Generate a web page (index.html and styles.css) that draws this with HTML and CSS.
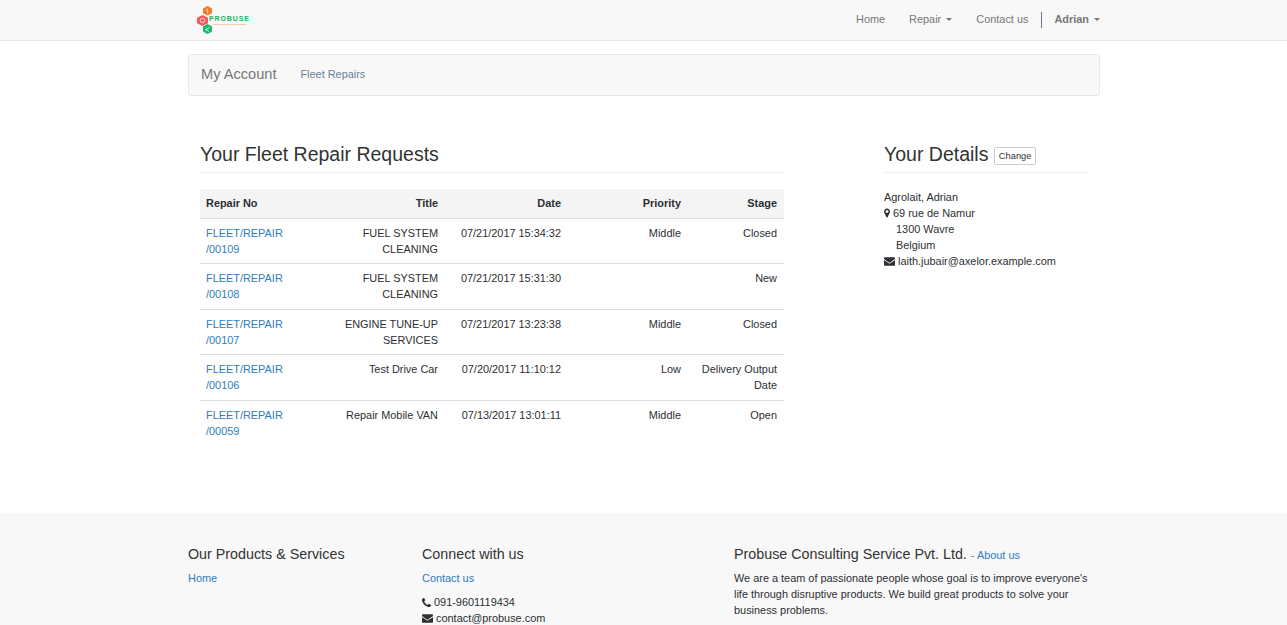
FILE: index.html
```html
<!DOCTYPE html>
<html lang="en">
<head>
<meta charset="utf-8">
<title>Fleet Repairs</title>
<link rel="stylesheet" href="styles.css">
</head>
<body>
<svg class="defs" width="0" height="0" aria-hidden="true">
  <symbol id="i-marker" viewBox="384 128 1024 1536"><path d="M1152 640q0-106-75-181t-181-75-181 75-75 181 75 181 181 75 181-75 75-181zm256 0q0 109-33 179l-364 774q-16 33-47.5 52t-67.5 19-67.5-19-46.5-52l-365-774q-33-70-33-179 0-212 150-362t362-150 362 150 150 362z"/></symbol>
  <symbol id="i-env" viewBox="0 256 1792 1408"><path d="M1792 710v794q0 66-47 113t-113 47h-1472q-66 0-113-47t-47-113v-794q44 49 101 87 362 246 497 345 57 42 92.5 65.5t94.5 48 110 24.5h2q51 0 110-24.5t94.5-48 92.5-65.5q170-123 498-345 57-39 100-87zm0-294q0 79-49 151t-122 123q-376 261-468 325-10 7-42.5 30.5t-54 38-52 32.5-57.5 27-50 9h-2q-23 0-50-9t-57.5-27-52-32.5-54-38-42.5-30.5q-91-64-262-182.5t-205-142.5q-62-42-117-115.5t-55-136.5q0-78 41.5-130t118.5-52h1472q65 0 112.5 47t47.5 113z"/></symbol>
  <symbol id="i-phone" viewBox="192 128 1408 1408"><path d="M1600 1240q0 27-10 70.5t-21 68.5q-21 50-122 106-94 51-186 51-27 0-53-3.5t-57.5-12.5-47-14.5-55.5-20.5-49-18q-98-35-175-83-127-79-264-216t-216-264q-48-77-83-175-3-9-18-49t-20.5-55.5-14.5-47-12.5-57.5-3.5-53q0-92 51-186 56-101 106-122 25-11 68.5-21t70.5-10q14 0 21 3 18 6 53 76 11 19 30 54t35 63.5 31 53.5q3 4 17.5 25t21.5 35.5 7 28.5q0 20-28.5 50t-62 55-62 53-28.5 46q0 9 5 22.5t8.5 20.5 14 24 11.5 19q76 137 174 235t235 174q2 1 19 11.5t24 14 20.5 8.5 22.5 5q18 0 46-28.5t53-62 55-62 50-28.5q14 0 28.5 7t35.5 21.5 25 17.5q25 15 53.5 31t63.5 35 54 30q70 35 76 53 3 7 3 21z"/></symbol>
</svg>

<header class="navbar">
  <div class="wrap navbar-inner">
    <a class="logo" href="#">
      <svg class="logo-mark" width="18" height="28" viewBox="0 0 18 28" aria-hidden="true">
        <polygon points="10.5,0 15,2.4 15,7.2 10.5,9.6 6,7.2 6,2.4" fill="#f47b2a"/>
        <polygon points="5.5,9 11,11.8 11,17.2 5.5,20 0,17.2 0,11.8" fill="#ef5a5c"/>
        <polygon points="10.5,18 15,20.6 15,25.4 10.5,28 6,25.4 6,20.6" fill="#17b868"/>
        <circle cx="5.5" cy="14.5" r="2.2" fill="none" stroke="#fcdcdc" stroke-width="1"/>
        <path d="M8.5 23.5l4-2M8.5 23.5l3.5 2" stroke="#d5f5e4" stroke-width="1"/>
        <path d="M10.5 2.5v5M9 4l2.5 1" stroke="#fbc8a3" stroke-width="1" fill="none"/>
      </svg>
      <span class="logo-text">
        <span class="logo-name">PROBUSE</span>
        <span class="logo-tag">PROFESSIONAL BUILDERS</span>
      </span>
    </a>
    <nav class="nav">
      <a href="#">Home</a>
      <a href="#">Repair <i class="caret"></i></a>
      <a href="#">Contact us</a>
      <span class="nav-divider"></span>
      <a class="nav-user" href="#">Adrian <i class="caret"></i></a>
    </nav>
  </div>
</header>

<main class="wrap">
  <div class="subnav">
    <span class="subnav-brand">My Account</span>
    <a class="subnav-link" href="#">Fleet Repairs</a>
  </div>

  <div class="content">
    <section class="requests">
      <h3 class="page-head">Your Fleet Repair Requests</h3>
      <table class="table">
        <thead>
          <tr><th class="c-no">Repair No</th><th class="c-title">Title</th><th class="c-date">Date</th><th class="c-pri">Priority</th><th class="c-stage">Stage</th></tr>
        </thead>
        <tbody>
          <tr><td class="c-no"><a href="#">FLEET/REPAIR<br>/00109</a></td><td class="c-title">FUEL SYSTEM CLEANING</td><td class="c-date">07/21/2017 15:34:32</td><td class="c-pri">Middle</td><td class="c-stage">Closed</td></tr>
          <tr><td class="c-no"><a href="#">FLEET/REPAIR<br>/00108</a></td><td class="c-title">FUEL SYSTEM CLEANING</td><td class="c-date">07/21/2017 15:31:30</td><td class="c-pri"></td><td class="c-stage">New</td></tr>
          <tr><td class="c-no"><a href="#">FLEET/REPAIR<br>/00107</a></td><td class="c-title">ENGINE TUNE-UP SERVICES</td><td class="c-date">07/21/2017 13:23:38</td><td class="c-pri">Middle</td><td class="c-stage">Closed</td></tr>
          <tr><td class="c-no"><a href="#">FLEET/REPAIR<br>/00106</a></td><td class="c-title">Test Drive Car</td><td class="c-date">07/20/2017 11:10:12</td><td class="c-pri">Low</td><td class="c-stage">Delivery Output Date</td></tr>
          <tr><td class="c-no"><a href="#">FLEET/REPAIR<br>/00059</a></td><td class="c-title">Repair Mobile VAN</td><td class="c-date">07/13/2017 13:01:11</td><td class="c-pri">Middle</td><td class="c-stage">Open</td></tr>
        </tbody>
      </table>
    </section>

    <aside class="details">
      <h3 class="page-head">Your Details <a class="btn-change" href="#">Change</a></h3>
      <address class="addr">
        <div>Agrolait, Adrian</div>
        <div><svg class="ico ico-marker"><use href="#i-marker"/></svg> 69 rue de Namur</div>
        <div class="addr-indent">1300 Wavre</div>
        <div class="addr-indent">Belgium</div>
        <div><svg class="ico ico-env"><use href="#i-env"/></svg> laith.jubair@axelor.example.com</div>
      </address>
    </aside>
  </div>
</main>

<footer class="footer">
  <div class="wrap footer-inner">
    <div class="f-col f-products">
      <h4 class="f-head">Our Products &amp; Services</h4>
      <a href="#">Home</a>
    </div>
    <div class="f-col f-connect">
      <h4 class="f-head">Connect with us</h4>
      <p class="f-link"><a href="#">Contact us</a></p>
      <div><svg class="ico ico-phone"><use href="#i-phone"/></svg> 091-9601119434</div>
      <div><svg class="ico ico-env"><use href="#i-env"/></svg> contact@probuse.com</div>
    </div>
    <div class="f-col f-about">
      <h4 class="f-head">Probuse Consulting Service Pvt. Ltd. <small class="f-small">- <a href="#">About us</a></small></h4>
      <p class="f-text">We are a team of passionate people whose goal is to improve everyone's life through disruptive products. We build great products to solve your business problems.</p>
    </div>
  </div>
</footer>
</body>
</html>
```

FILE: styles.css
```css
* { box-sizing: border-box; }
html, body { margin: 0; padding: 0; }
body {
  font-family: "Liberation Sans", Arial, sans-serif;
  font-size: 10.92px;
  line-height: 16.25px;
  color: #2d2f33;
  background: #fff;
  overflow-x: hidden;
}
a { color: #2f7cc0; text-decoration: none; }
.defs { position: absolute; }
.wrap { width: 912px; margin-left: 188px; }

.navbar {
  height: 41px;
  background: #f8f8f8;
  border-bottom: 1px solid #e7e7e7;
}
.navbar-inner { display: flex; justify-content: space-between; align-items: center; height: 40px; }
.logo { display: flex; align-items: flex-start; margin-left: 9px; height: 28px; margin-top: 0; }
.logo-text { display: flex; flex-direction: column; margin-left: -6px; padding-top: 9px; }
.logo-name {
  font-size: 7px; line-height: 8px; font-weight: bold; letter-spacing: 0.9px; color: #14b562;
}
.logo-tag { font-size: 2.5px; line-height: 4px; font-weight: bold; color: #f09a4b; white-space: nowrap; padding-left: 4px; }
.nav { display: flex; align-items: center; }
.nav a { color: #777; padding-bottom: 2px; }
.nav > a { margin-right: 24px; }
.nav > a:nth-of-type(3) { margin-right: 13px; }
.nav > a.nav-user { margin-right: 0; margin-left: 12px; font-weight: bold; }
.nav-divider { width: 1px; height: 16px; background: #777; }
.caret {
  display: inline-block; width: 0; height: 0; margin-left: 2px; vertical-align: middle;
  border-top: 3px solid #777; border-left: 3px solid transparent; border-right: 3px solid transparent;
}

.subnav {
  display: flex; align-items: center;
  height: 42px; margin-top: 13px;
  background: #f8f8f8; border: 1px solid #e7e7e7; border-radius: 3px;
  padding-left: 12px; padding-bottom: 2px;
}
.subnav-brand { font-size: 14.6px; color: #777; margin-right: 24px; }
.subnav-link { color: #6b7f96; }

.content { display: flex; margin-top: 48px; padding-left: 12px; }
.requests { width: 584px; }
.details { width: 204px; margin-left: 100px; }
.page-head {
  font-size: 19.5px; line-height: 21px; font-weight: normal; color: #333;
  margin: 0; padding-bottom: 7px; border-bottom: 1px solid #eee;
}
.requests .page-head { margin-bottom: 16px; }
.btn-change {
  display: inline-block; vertical-align: 2px;
  font-size: 9.3px; line-height: 14px; color: #333;
  padding: 1px 4px; background: #fff; border: 1px solid #ccc; border-radius: 2px;
}

.table { width: 100%; border-collapse: collapse; table-layout: fixed; }
.table th, .table td { padding: 6px; text-align: right; vertical-align: top; }
.table th { background: #f4f4f4; border-bottom: 1px solid #ddd; height: 29px; }
.table tbody tr + tr td { border-top: 1px solid #ddd; }
.table .c-no { text-align: left; width: 90px; }
.table .c-title { width: 154px; padding-left: 40px; }
.c-date { width: 123px; }
.c-pri { width: 120px; }
.table .c-stage { width: 97px; padding-right: 7px; }

.addr { font-style: normal; margin-top: 16px; line-height: 16px; }
.addr-indent { padding-left: 12px; }
.ico { display: inline-block; fill: #2d2f33; vertical-align: -1px; }
.ico-marker { width: 6px; height: 10px; }
.ico-env { width: 11px; height: 9px; }
.ico-phone { width: 9px; height: 9px; }

.footer { margin-top: 68px; background: #f8f8f8; padding-top: 32px; padding-bottom: 40px; }
.footer-inner { display: flex; }
.f-head { font-size: 14.3px; line-height: 18px; font-weight: normal; color: #333; margin: 0 0 7px; }
.f-products { width: 234px; }
.f-connect { width: 312px; line-height: 16px; }
.f-about { width: 366px; }
.f-link { margin: 0 0 8px; }
.f-small { font-size: 10.92px; line-height: 1; color: #777; }
.f-text { margin: 0; line-height: 16px; }
```
